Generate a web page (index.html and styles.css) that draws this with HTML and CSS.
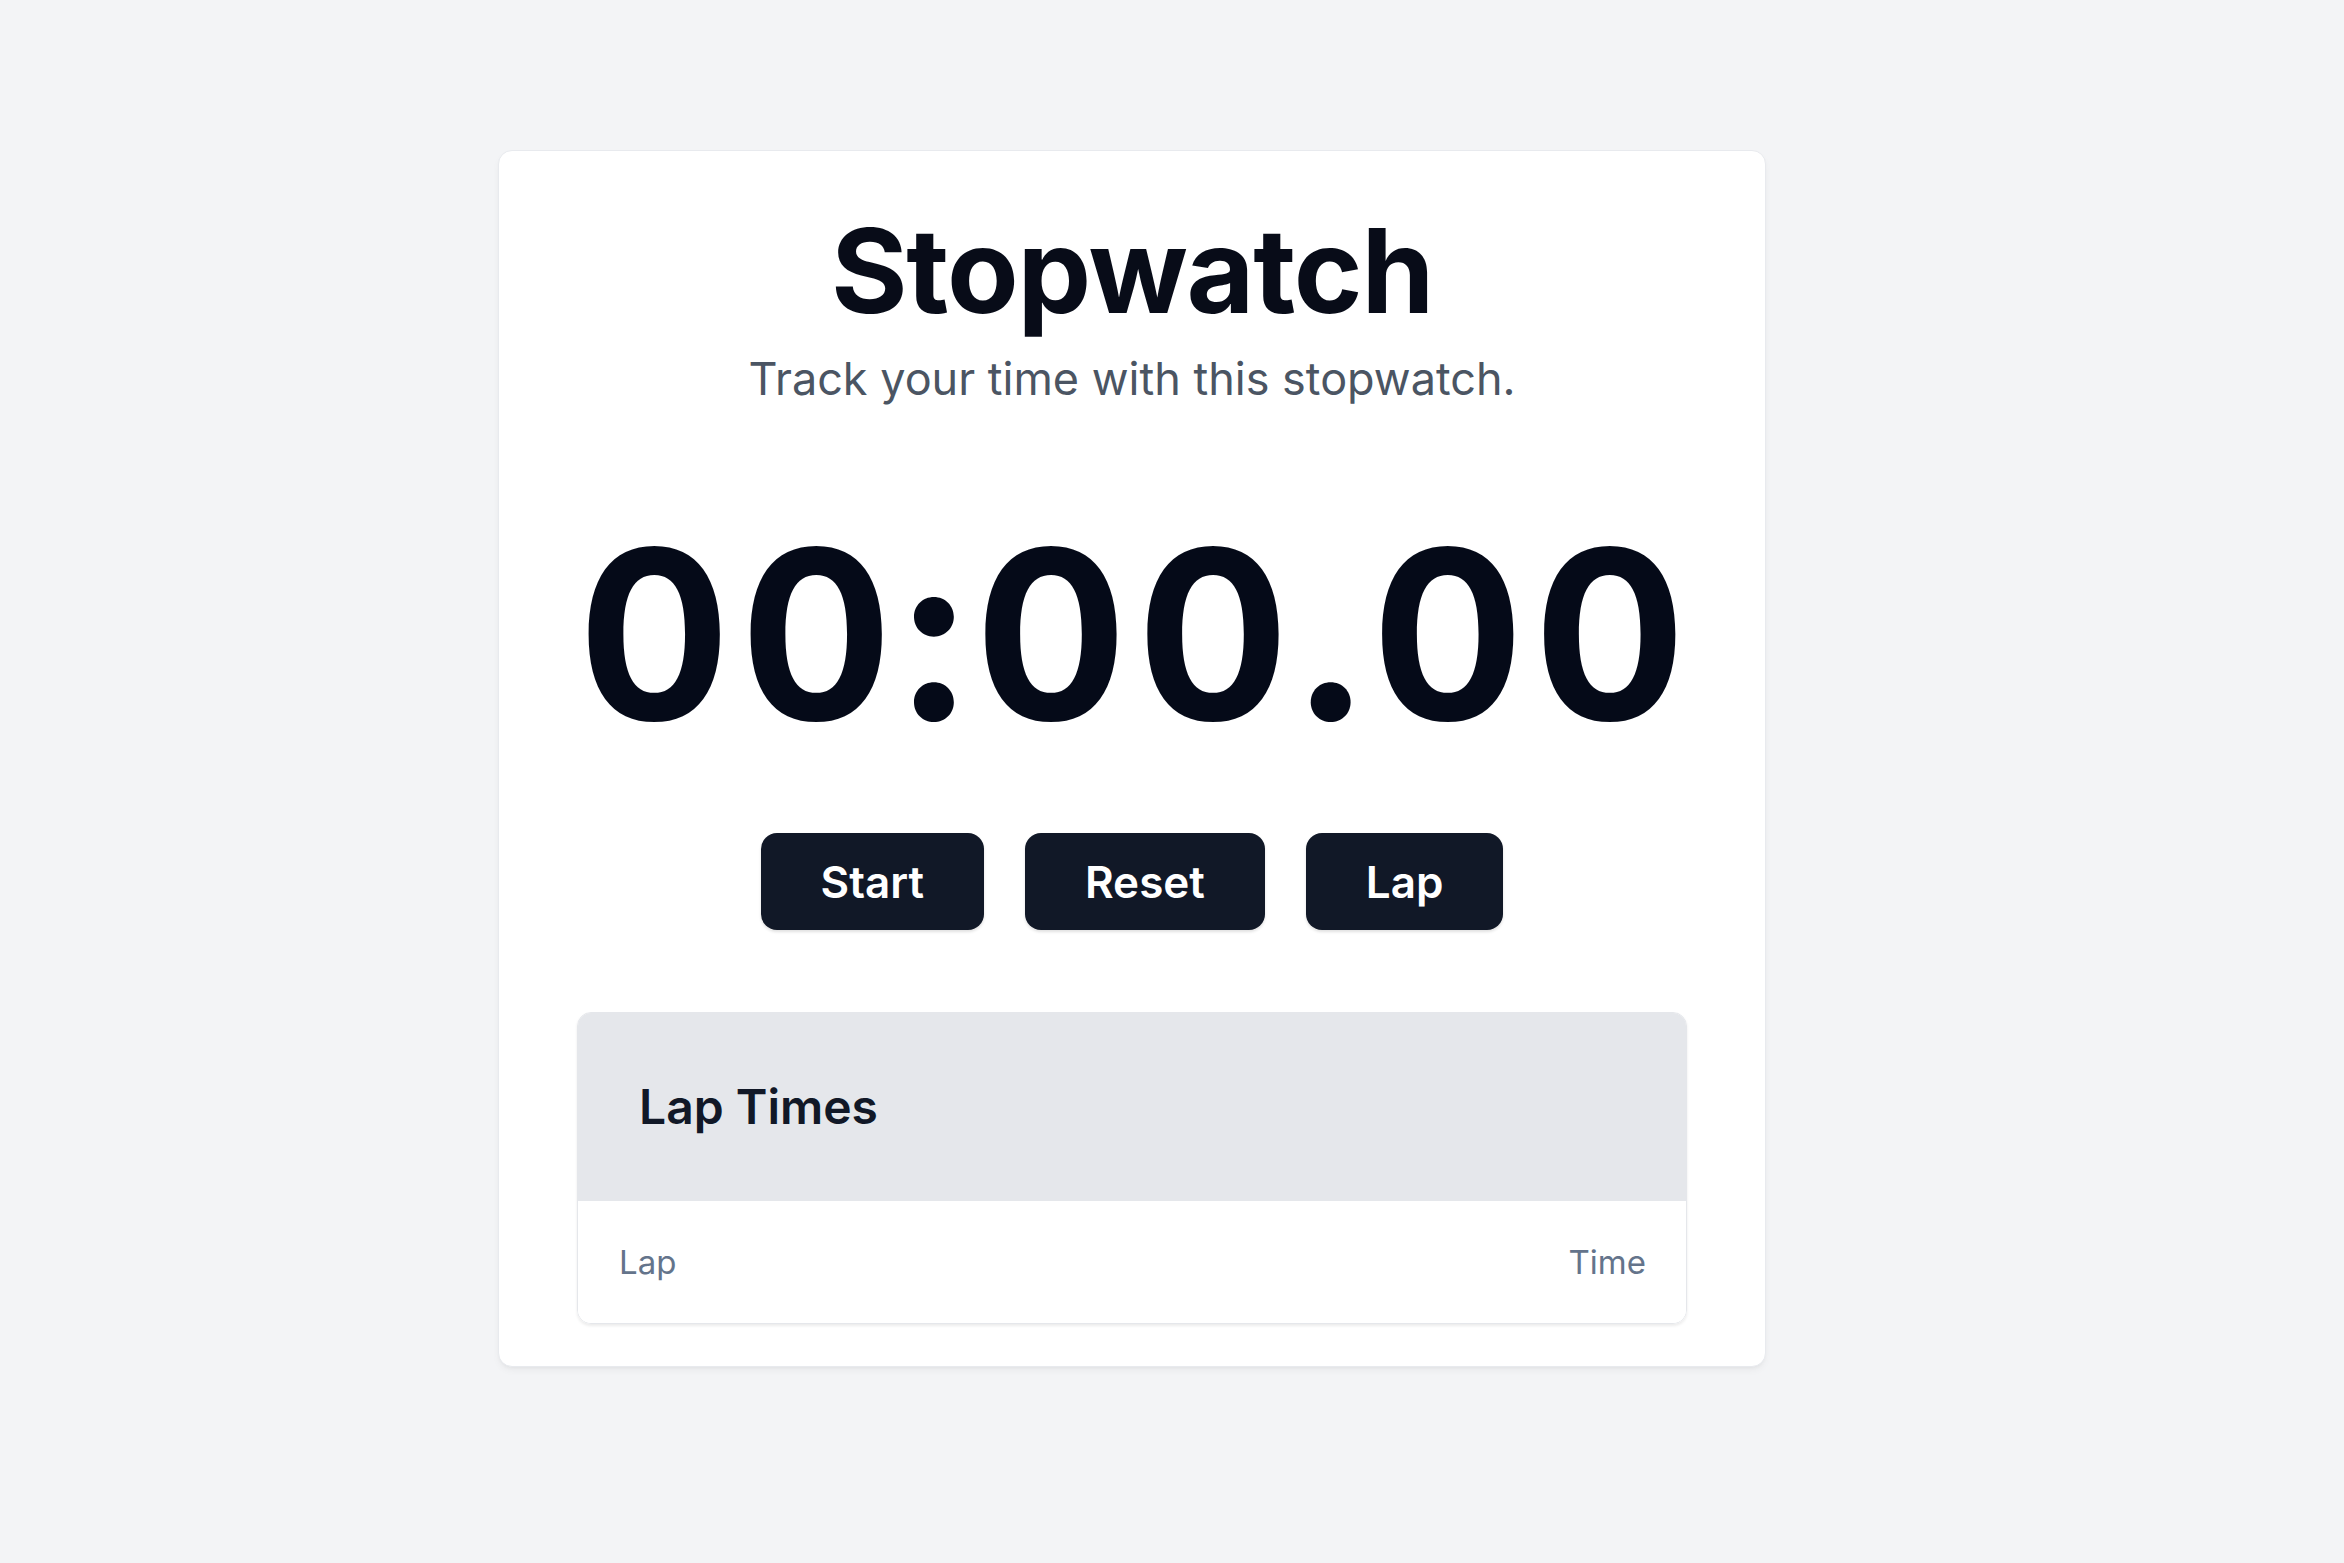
FILE: index.html
```html
<!DOCTYPE html>
<html lang="en">
<head>
<meta charset="utf-8">
<title>Stopwatch</title>
<link rel="stylesheet" href="styles.css">
</head>
<body>
  <main class="page">
    <section class="card">
      <h1 class="title">Stopwatch</h1>
      <p class="subtitle">Track your time with this stopwatch.</p>
      <div class="display">00:00.00</div>
      <div class="controls">
        <button class="btn">Start</button>
        <button class="btn">Reset</button>
        <button class="btn">Lap</button>
      </div>
      <div class="laps">
        <div class="laps-header">
          <h2 class="laps-title">Lap Times</h2>
        </div>
        <div class="laps-cols">
          <span class="col-label">Lap</span>
          <span class="col-label">Time</span>
        </div>
      </div>
    </section>
  </main>
</body>
</html>
```

FILE: styles.css
```css
* {
  box-sizing: border-box;
}

html, body {
  margin: 0;
  padding: 0;
  background: #f3f4f6;
  font-family: "Inter", "Noto Sans", "Liberation Sans", sans-serif;
  color: #0b1120;
}

.page {
  min-height: 100vh;
  display: flex;
  justify-content: center;
  align-items: flex-start;
  padding: 150px 80px 0 0;
}

.card {
  width: 1268px;
  background: #ffffff;
  border: 1px solid #e8eaee;
  border-radius: 14px;
  box-shadow: 0 4px 8px -2px rgba(0, 0, 0, 0.06), 0 2px 4px -2px rgba(0, 0, 0, 0.05);
  padding: 64px 78px 42px;
  display: flex;
  flex-direction: column;
  align-items: center;
}

.title {
  margin: 0;
  font-size: 117px;
  line-height: 112px;
  font-weight: 700;
  letter-spacing: -0.01em;
  color: #080c18;
}

.subtitle {
  margin: 30px 0 0;
  font-size: 45px;
  line-height: 44px;
  font-weight: 400;
  color: #4b5563;
}

.display {
  margin-top: 115px;
  font-size: 236px;
  line-height: 237px;
  font-weight: 700;
  letter-spacing: 0.04em;
  padding-left: 0.04em;
  color: #050a18;
  font-variant-numeric: tabular-nums;
}

.controls {
  margin-top: 80px;
  display: flex;
  gap: 41px;
}

.btn {
  height: 97px;
  padding: 0 60px;
  border: none;
  border-radius: 16px;
  background: #111827;
  color: #ffffff;
  font-family: inherit;
  font-size: 44px;
  font-weight: 600;
  box-shadow: 0 2px 3px rgba(0, 0, 0, 0.12);
}

.laps {
  margin-top: 82px;
  width: 100%;
  border: 1px solid #e5e7eb;
  border-radius: 14px;
  overflow: hidden;
  box-shadow: 0 2px 3px rgba(0, 0, 0, 0.08);
}

.laps-header {
  background: #e5e7eb;
  height: 188px;
  display: flex;
  align-items: center;
  padding: 0 61px;
}

.laps-title {
  margin: 0;
  font-size: 48px;
  line-height: 60px;
  font-weight: 600;
  color: #111827;
}

.laps-cols {
  height: 122px;
  display: flex;
  justify-content: space-between;
  align-items: center;
  padding: 0 40px 0 41px;
  background: #ffffff;
}

.col-label {
  font-size: 33px;
  font-weight: 400;
  color: #64748b;
}
```
